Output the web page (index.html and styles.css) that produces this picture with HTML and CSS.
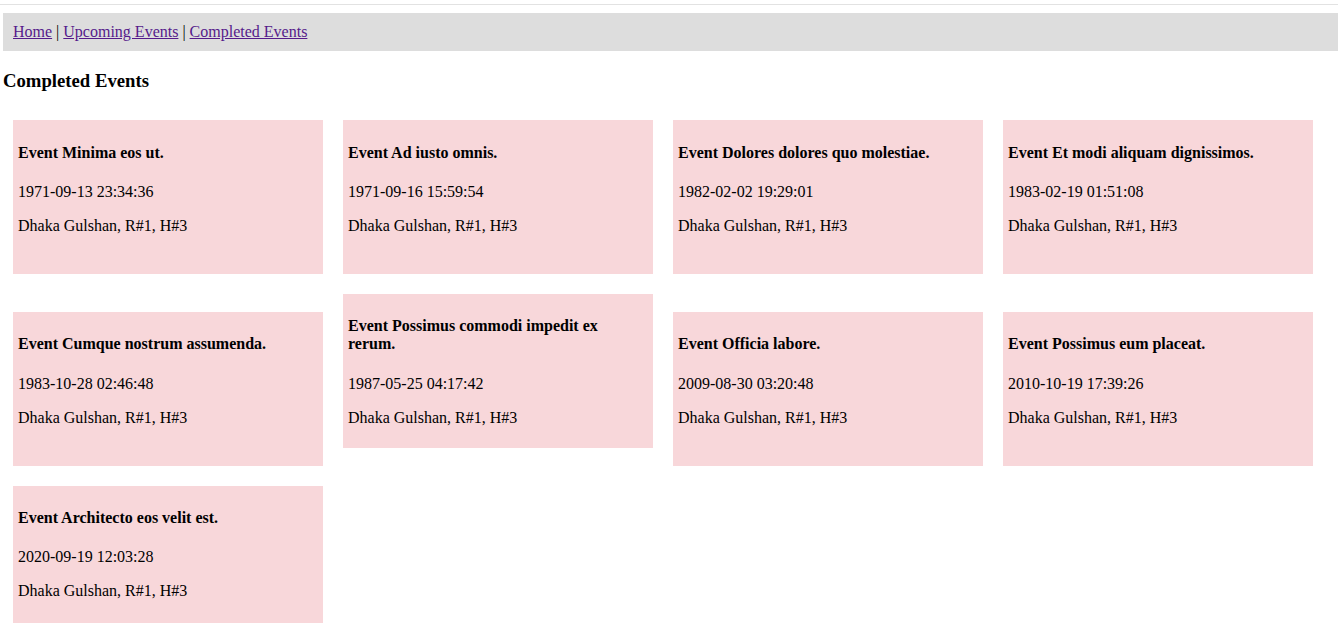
FILE: index.html
```html
<!DOCTYPE html>
<html>
<head>
<meta charset="utf-8">
<title>Completed Events</title>
<link rel="stylesheet" href="styles.css">
</head>
<body>
<div class="rule"></div>
<div class="page">
  <nav class="nav"><a href="#">Home</a> | <a href="#">Upcoming Events</a> | <a href="#">Completed Events</a></nav>
  <h3 class="heading">Completed Events</h3>
  <div class="events">
    <div class="card"><h4>Event Minima eos ut.</h4><p>1971-09-13 23:34:36</p><p>Dhaka Gulshan, R#1, H#3</p></div>
    <div class="card"><h4>Event Ad iusto omnis.</h4><p>1971-09-16 15:59:54</p><p>Dhaka Gulshan, R#1, H#3</p></div>
    <div class="card"><h4>Event Dolores dolores quo molestiae.</h4><p>1982-02-02 19:29:01</p><p>Dhaka Gulshan, R#1, H#3</p></div>
    <div class="card"><h4>Event Et modi aliquam dignissimos.</h4><p>1983-02-19 01:51:08</p><p>Dhaka Gulshan, R#1, H#3</p></div>
    <div class="card"><h4>Event Cumque nostrum assumenda.</h4><p>1983-10-28 02:46:48</p><p>Dhaka Gulshan, R#1, H#3</p></div>
    <div class="card"><h4>Event Possimus commodi impedit ex rerum.</h4><p>1987-05-25 04:17:42</p><p>Dhaka Gulshan, R#1, H#3</p></div>
    <div class="card"><h4>Event Officia labore.</h4><p>2009-08-30 03:20:48</p><p>Dhaka Gulshan, R#1, H#3</p></div>
    <div class="card"><h4>Event Possimus eum placeat.</h4><p>2010-10-19 17:39:26</p><p>Dhaka Gulshan, R#1, H#3</p></div>
    <div class="card"><h4>Event Architecto eos velit est.</h4><p>2020-09-19 12:03:28</p><p>Dhaka Gulshan, R#1, H#3</p></div>
  </div>
</div>
</body>
</html>
```
FILE: styles.css
```css
html, body {
  margin: 0;
  padding: 0;
  background: #ffffff;
  font-family: "Liberation Serif", "Times New Roman", serif;
  font-size: 16px;
  color: #000000;
}
.rule {
  margin-top: 4px;
  height: 1px;
  background: #e2e2e2;
}
.page {
  padding: 8px 0 0 3px;
}
.nav {
  background: #dddddd;
  padding: 10px;
  line-height: 18px;
}
.nav a {
  color: #551a8b;
}
.heading {
  font-size: 18.72px;
  margin: 18.72px 0;
}
.events {
  display: flex;
  flex-wrap: wrap;
  align-items: last baseline;
}
.card {
  box-sizing: border-box;
  width: 310px;
  height: 153.6px;
  margin: 10px;
  padding: 2.2px 5px 2px;
  background: #f8d7da;
}
.card h4 {
  font-size: 16px;
  margin: 21.28px 0;
}
.card p {
  margin: 16px 0;
}
```
